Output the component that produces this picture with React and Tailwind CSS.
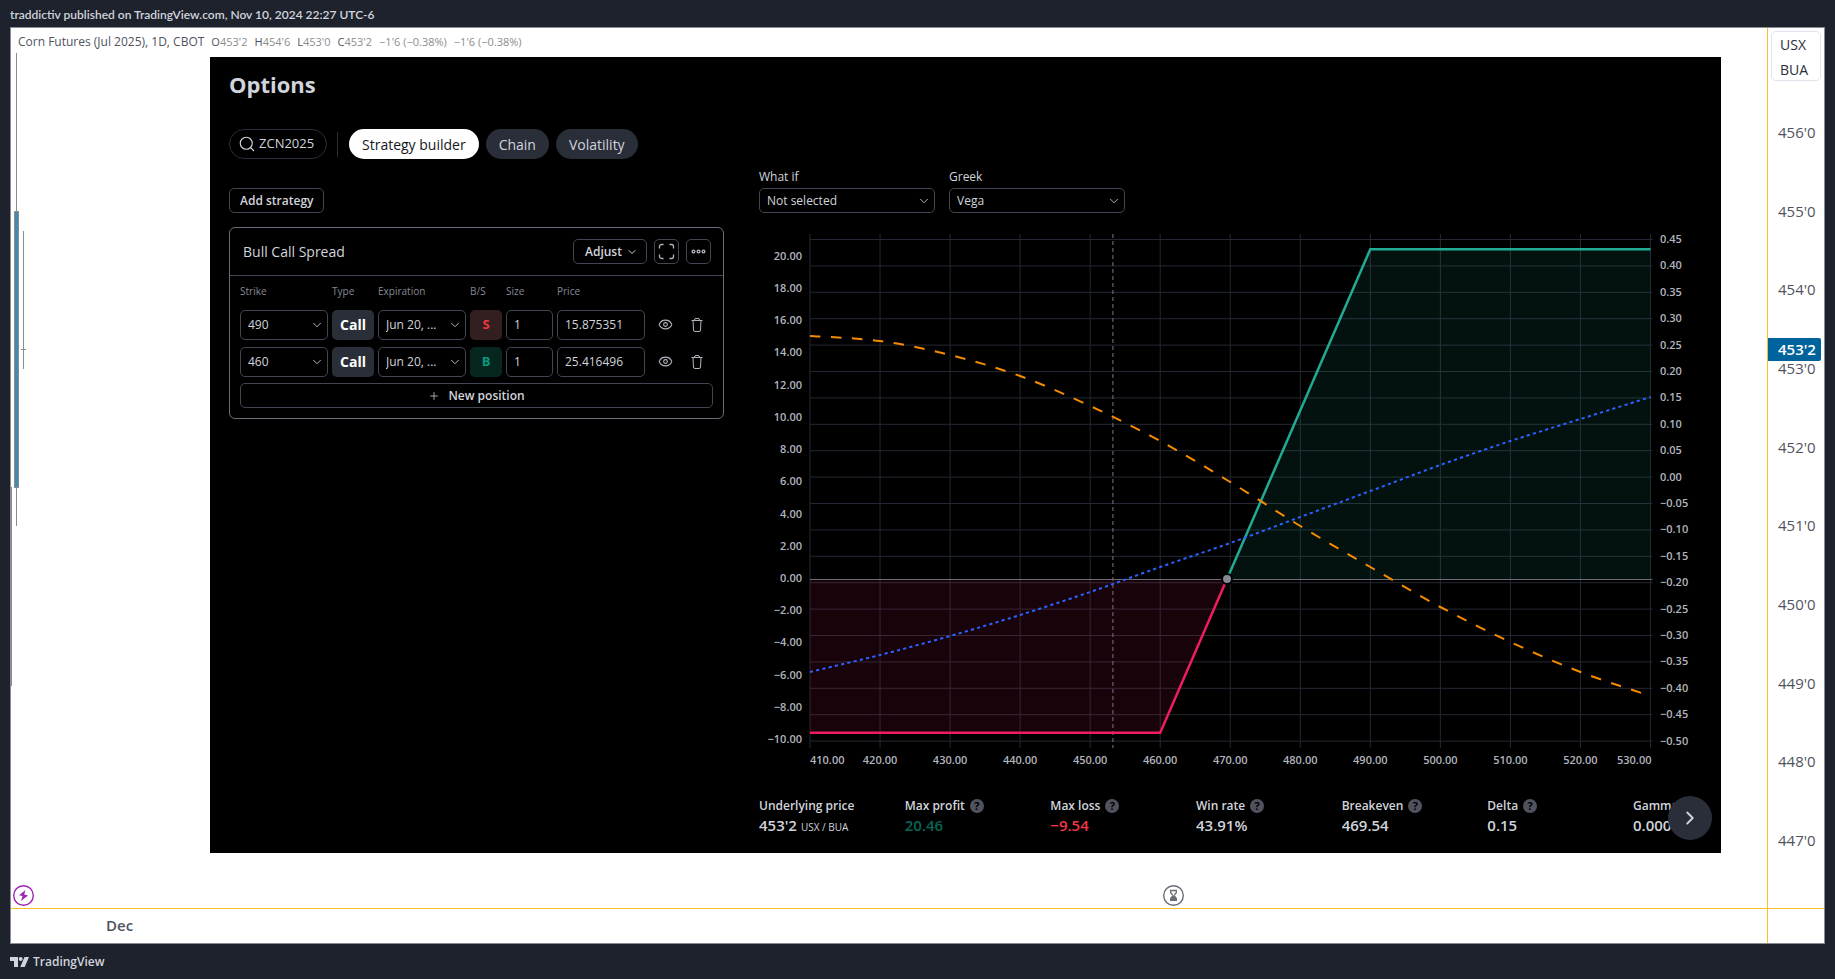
import React, { useState } from 'react';
import { ChevronDown, ChevronRight, Eye, Plus, Search } from 'lucide-react';

const statItems = [
    { label: 'Underlying price', value: "453'2", unit: 'USX / BUA' },
    { label: 'Max profit', value: '20.46', color: 'text-[#056656]', help: true },
    { label: 'Max loss', value: '−9.54', color: 'text-[#f23645]', help: true },
    { label: 'Win rate', value: '43.91%', help: true },
    { label: 'Breakeven', value: '469.54', help: true },
    { label: 'Delta', value: '0.15', help: true },
    { label: 'Gamma', value: '0.0001', help: true },
];

const initialPositions = [
    { id: 1, strike: '490', type: 'Call', expiration: 'Jun 20, ...', side: 'S', size: '1', price: '15.875351' },
    { id: 2, strike: '460', type: 'Call', expiration: 'Jun 20, ...', side: 'B', size: '1', price: '25.416496' },
];

const priceLabels = ["456'0", "455'0", "454'0", "453'0", "452'0", "451'0", "450'0", "449'0", "448'0", "447'0"];

const tabs = ['Strategy builder', 'Chain', 'Volatility'];

const App = () => {
    const [activeTab, setActiveTab] = useState('Strategy builder');
    const [positions, setPositions] = useState(initialPositions);

    const updatePosition = (id, field, value) => {
        setPositions(positions.map((p) => (p.id === id ? { ...p, [field]: value } : p)));
    };

    return (
        <div className="flex min-h-screen flex-col bg-[#1e222d] px-[10px] font-['Open_Sans',sans-serif]">
            <header className="h-[27px] font-['Lato',sans-serif] text-[12px] leading-[30px] font-semibold text-[#d1d4dc]">
                traddictiv published on TradingView.com, Nov 10, 2024 22:27 UTC-6
            </header>

            <main className="grid flex-1 grid-cols-[minmax(0,1fr)_57px] grid-rows-[1fr_35px] border border-[#8a8d96] bg-white">
                <section className="relative pr-[46px] pb-[55px] pl-[199px]">
                    <Candles />
                    <Legend />

                    <div className="relative bg-black px-[19px] pb-[16px] text-[#d1d4dc]">
                        <h1 className="pt-[10px] text-[22px] leading-[34px] font-bold">Options</h1>

                        <nav className="mt-[28px] flex h-[30px] items-center text-[14px]">
                            <button className="flex h-[30px] w-[98px] items-center gap-[3px] rounded-full border border-[#2a2e39] pl-2 text-[13px] font-medium">
                                <Search className="h-[18px] w-[18px]" strokeWidth={1.5} />
                                ZCN2025
                            </button>
                            <span className="mr-[11px] ml-[10px] h-[25px] w-px bg-[#2a2e39]" />
                            <div className="flex gap-[7px]">
                                {tabs.map((tab) => (
                                    <button
                                        key={tab}
                                        onClick={() => setActiveTab(tab)}
                                        className={`h-[30px] rounded-full px-[13px] ${activeTab === tab
                                            ? 'bg-white text-[#131722]'
                                            : 'bg-[#2a2e39] text-[#d1d4dc]'
                                            }`}
                                    >
                                        {tab}
                                    </button>
                                ))}
                            </div>
                        </nav>

                        <div className="mt-[8px] grid grid-cols-[495px_minmax(0,1fr)] gap-[35px]">
                            {/* Strategy column */}
                            <div className="pt-[21px]">
                                <button className="block h-[25px] rounded-[5px] border border-[#434651] px-[10px] text-[12px] font-semibold">
                                    Add strategy
                                </button>

                                <div className="mt-[14px] rounded-[6px] border border-[#6a6d78]">
                                    <div className="flex h-[48px] items-center gap-[7px] border-b border-[#434651] pr-[12px] pl-[13px]">
                                        <h2 className="mr-auto text-[14px]">Bull Call Spread</h2>
                                        <button className="flex h-[25px] w-[74px] items-center justify-between rounded-[5px] border border-[#434651] pr-2 pl-[11px] text-[12px] font-semibold">
                                            Adjust
                                            <ChevronDown className="h-3 w-3" strokeWidth={2} />
                                        </button>
                                        <button aria-label="Fullscreen" className="flex h-[25px] w-[25px] items-center justify-center rounded-[5px] border border-[#434651]">
                                            <FullscreenIcon />
                                        </button>
                                        <button aria-label="More" className="flex h-[25px] w-[25px] items-center justify-center rounded-[5px] border border-[#434651]">
                                            <MoreIcon />
                                        </button>
                                    </div>

                                    <div className="px-[10px] pb-[10px]">
                                        <table className="w-full table-fixed text-[12px]">
                                            <colgroup>
                                                <col className="w-[92px]" />
                                                <col className="w-[46px]" />
                                                <col className="w-[92px]" />
                                                <col className="w-[36px]" />
                                                <col className="w-[51px]" />
                                                <col className="w-[92px]" />
                                                <col />
                                                <col />
                                            </colgroup>
                                            <thead>
                                                <tr className="h-[30px] text-left text-[10px] text-[#868993]">
                                                    <th className="font-normal">Strike</th>
                                                    <th className="font-normal">Type</th>
                                                    <th className="font-normal">Expiration</th>
                                                    <th className="font-normal">B/S</th>
                                                    <th className="font-normal">Size</th>
                                                    <th className="font-normal">Price</th>
                                                    <th />
                                                    <th />
                                                </tr>
                                            </thead>
                                            <tbody>
                                                {positions.map((p) => (
                                                    <tr key={p.id} className="h-[37px]">
                                                        <td className="pr-1">
                                                            <SelectBox label="Strike" options={[p.strike]} className="h-[30px]" />
                                                        </td>
                                                        <td className="pr-1">
                                                            <button className="block h-[30px] w-full rounded-[5px] bg-[#2a2e39] text-[14px] leading-[28px] font-bold text-white">
                                                                {p.type}
                                                            </button>
                                                        </td>
                                                        <td className="pr-1">
                                                            <SelectBox label="Expiration" options={[p.expiration]} className="h-[30px]" />
                                                        </td>
                                                        <td className="pr-1">
                                                            <button
                                                                className={`block h-[30px] w-full rounded-[5px] text-[13px] font-bold ${p.side === 'S'
                                                                    ? 'bg-[#331f20] text-[#f23645]'
                                                                    : 'bg-[#06271f] text-[#089981]'
                                                                    }`}
                                                            >
                                                                {p.side}
                                                            </button>
                                                        </td>
                                                        <td className="pr-1">
                                                            <input
                                                                aria-label="Size"
                                                                value={p.size}
                                                                onChange={(e) => updatePosition(p.id, 'size', e.target.value)}
                                                                className="block h-[30px] w-full rounded-[5px] border border-[#434651] px-[7px] font-medium"
                                                            />
                                                        </td>
                                                        <td className="pr-1">
                                                            <input
                                                                aria-label="Price"
                                                                value={p.price}
                                                                onChange={(e) => updatePosition(p.id, 'price', e.target.value)}
                                                                className="block h-[30px] w-full rounded-[5px] border border-[#434651] px-[7px] font-medium"
                                                            />
                                                        </td>
                                                        <td>
                                                            <button aria-label="Hide" className="mx-auto block text-[#b2b5be]">
                                                                <Eye className="h-[15px] w-[15px]" strokeWidth={1.7} />
                                                            </button>
                                                        </td>
                                                        <td>
                                                            <button aria-label="Delete" className="mx-auto block text-[#b2b5be]">
                                                                <TrashIcon />
                                                            </button>
                                                        </td>
                                                    </tr>
                                                ))}
                                            </tbody>
                                        </table>

                                        <button className="mt-[3px] flex h-[25px] w-full items-center justify-center gap-2 rounded-[5px] border border-[#434651] text-[12px] font-semibold">
                                            <Plus className="h-3 w-3" strokeWidth={1.5} />
                                            New position
                                        </button>
                                    </div>
                                </div>
                            </div>

                            {/* Chart column */}
                            <div>
                                <div className="flex gap-[14px] text-[12px]">
                                    <label className="w-[176px]">
                                        <span className="block h-[21px] leading-[19px]">What if</span>
                                        <SelectBox options={['Not selected']} className="h-[25px]" />
                                    </label>
                                    <label className="w-[176px]">
                                        <span className="block h-[21px] leading-[19px]">Greek</span>
                                        <SelectBox options={['Vega']} className="h-[25px]" />
                                    </label>
                                </div>

                                <PayoffChart />

                                <div className="mt-[29px] grid grid-cols-[repeat(6,minmax(0,1fr))_69px] overflow-hidden">
                                    {statItems.map((item) => (
                                        <StatItem key={item.label} {...item} />
                                    ))}
                                </div>
                            </div>
                        </div>

                        <button aria-label="Next" className="absolute right-[9px] bottom-[13px] flex h-[44px] w-[44px] items-center justify-center rounded-full bg-[#2a2e39]">
                            <ChevronRight className="h-[22px] w-[22px]" strokeWidth={2} />
                        </button>
                    </div>

                    <span className="absolute bottom-[2px] left-[2px]"><BoltBadge /></span>
                    <span className="absolute bottom-[2px] left-[65.6%]"><HourglassBadge /></span>
                </section>

                <PriceScale />

                <div className="border-t border-[#f7c02c] pl-[95px] text-[15px] leading-[32px] font-semibold text-[#50535e]">Dec</div>
                <div className="border-t border-l border-[#f7c02c]" />
            </main>

            <footer className="flex h-[35px] items-center gap-1 text-[12px] font-semibold text-[#d1d4dc]">
                <TradingViewLogo />
                TradingView
            </footer>
        </div>
    );
};

const Legend = () => (
    <p className="-ml-[199px] h-[29px] pl-[7px] text-[12px] leading-[28px] text-[#50535e]">
        Corn Futures (Jul 2025), 1D, CBOT
        <span className="text-[11px]">
            <span className="ml-[7px]">O<span className="text-[#8c8c8c]">453'2</span></span>
            <span className="ml-[7px]">H<span className="text-[#8c8c8c]">454'6</span></span>
            <span className="ml-[7px]">L<span className="text-[#8c8c8c]">453'0</span></span>
            <span className="ml-[7px]">C<span className="text-[#8c8c8c]">453'2</span></span>
            <span className="ml-[7px] text-[#8c8c8c]">−1'6 (−0.38%)</span>
            <span className="ml-[7px] text-[#8c8c8c]">−1'6 (−0.38%)</span>
        </span>
    </p>
);

const SelectBox = ({ label, options, className }) => (
    <span className="relative block">
        <select
            aria-label={label}
            className={`block w-full appearance-none rounded-[5px] border border-[#434651] bg-black pr-6 pl-[7px] font-medium ${className}`}
        >
            {options.map((o) => (
                <option key={o}>{o}</option>
            ))}
        </select>
        <ChevronDown className="pointer-events-none absolute inset-y-0 right-1 my-auto h-[14px] w-[14px] text-[#b2b5be]" strokeWidth={1.7} />
    </span>
);

const StatItem = ({ label, value, unit, color, help }) => (
    <div className="overflow-hidden whitespace-nowrap">
        <div className="flex h-[18px] items-center gap-[5px] text-[12px] font-semibold">
            {label}
            {help && (
                <span className="flex h-[14px] w-[14px] shrink-0 items-center justify-center rounded-full bg-[#50535e] text-[11px] leading-[14px] font-bold text-black">?</span>
            )}
        </div>
        <div className={`text-[15px] leading-[20px] font-semibold ${color || ''}`}>
            {value}
            {unit && <span className="ml-1 text-[10px] font-normal">{unit}</span>}
        </div>
    </div>
);

const PriceScale = () => (
    <aside className="relative border-l border-[#f7c02c] text-[15px] text-[#50535e]">
        <div className="mx-[3px] mt-[3px] h-[50px] rounded-[5px] border border-[#e0e3eb] pl-2 text-[14px] leading-[25px] text-[#2a2e39]">
            <div>USX</div>
            <div>BUA</div>
        </div>
        <div className="mt-[40px] flex h-[730px] flex-col justify-between pl-[10px] leading-[22px]">
            {priceLabels.map((label) => (
                <span key={label}>{label}</span>
            ))}
        </div>
        <span className="absolute top-[310px] left-0 w-[53px] rounded-r-[2px] bg-[#00639c] pl-[10px] leading-[23px] font-semibold text-white">453'2</span>
    </aside>
);

const xAt = (price) => 51 + (price - 410) * 7.004;
const yAt = (profit) => 345 - profit * 16.12;

const strikes = [410, 420, 430, 440, 450, 460, 470, 480, 490, 500, 510, 520, 530];
const profits = Array.from({ length: 16 }, (_, i) => 20 - i * 2);
const greeks = Array.from({ length: 20 }, (_, i) => (45 - i * 5) / 100);
const formatNumber = (n) => n.toFixed(2).replace('-', '−');

const vegaCurve = [102, 107, 121, 142, 172, 207, 248, 292, 333, 373, 408, 438, 462];
const todayCurve = [438, 421, 402, 381, 358, 333, 309, 283, 257, 231, 207, 185, 163];

// smooth line through evenly spaced samples
const curvePath = (values) => {
    const pts = values.map((y, i) => [xAt(410 + i * 10), y]);
    let d = `M${pts[0][0]} ${pts[0][1]}`;
    for (let i = 0; i < pts.length - 1; i++) {
        const p0 = pts[i - 1] || pts[i];
        const p1 = pts[i];
        const p2 = pts[i + 1];
        const p3 = pts[i + 2] || p2;
        d += ` C${p1[0] + (p2[0] - p0[0]) / 6} ${p1[1] + (p2[1] - p0[1]) / 6} ${p2[0] - (p3[0] - p1[0]) / 6} ${p2[1] - (p3[1] - p1[1]) / 6} ${p2[0]} ${p2[1]}`;
    }
    return d;
};

const PayoffChart = () => {
    const right = xAt(530);
    return (
        <svg viewBox="0 0 943 534" className="mt-[21px] block h-auto w-full overflow-visible" fontSize="11" fontWeight="600" fill="#b2b5be">
            {strikes.map((s) => (
                <line key={s} x1={xAt(s)} x2={xAt(s)} y1="0" y2="514" stroke="#242832" />
            ))}
            {greeks.map((g, i) => (
                <line key={g} x1="51" x2={right + 2} y1={5.5 + i * 26.4} y2={5.5 + i * 26.4} stroke="#242832" />
            ))}
            <line x1={xAt(453.25)} x2={xAt(453.25)} y1="0" y2="514" stroke="#787b86" strokeDasharray="4 3" />

            <path d={`M51 345V${yAt(-9.54)}H${xAt(460)}L${xAt(469.54)} 345Z`} fill="#e91e63" fillOpacity="0.1" />
            <path d={`M${xAt(469.54)} 345L${xAt(490)} ${yAt(20.46)}H${right}V345Z`} fill="#22ab94" fillOpacity="0.1" />
            <line x1="51" x2={right + 2} y1="345.5" y2="345.5" stroke="#6a6d78" />
            <path d={`M51 ${yAt(-9.54)}H${xAt(460)}L${xAt(469.54)} 345`} fill="none" stroke="#f01c60" strokeWidth="2.5" />
            <path d={`M${xAt(469.54)} 345L${xAt(490)} ${yAt(20.46)}H${right}`} fill="none" stroke="#22ab94" strokeWidth="2.5" />
            <path d={curvePath(vegaCurve)} fill="none" stroke="#f58b00" strokeWidth="2" strokeDasharray="10.5 10.5" />
            <path d={curvePath(todayCurve)} fill="none" stroke="#2962ff" strokeWidth="2" strokeDasharray="3.2 3.2" />
            <circle cx={xAt(469.54)} cy="345" r="5" fill="#868993" stroke="#000" strokeWidth="2" />

            {profits.map((p) => (
                <text key={p} x="43" y={yAt(p) + 3} textAnchor="end">{formatNumber(p)}</text>
            ))}
            {greeks.map((g, i) => (
                <text key={g} x="901" y={9 + i * 26.4}>{formatNumber(g)}</text>
            ))}
            {strikes.map((s) => (
                <text
                    key={s}
                    x={s === 530 ? right + 1 : xAt(s)}
                    y="530"
                    textAnchor={s === 410 ? 'start' : s === 530 ? 'end' : 'middle'}
                >
                    {formatNumber(s)}
                </text>
            ))}
        </svg>
    );
};

const Candles = () => (
    <svg className="absolute top-0 left-0" width="20" height="660" fill="#438ab3" stroke="#8c8c8c" shapeRendering="crispEdges">
        <rect x="-3.5" y="459.5" width="4" height="198" />
        <path d="M5.5 25V498M12.5 203V341M10 321.5H15" fill="none" />
        <rect x="3.5" y="183.5" width="4" height="276" />
    </svg>
);

const FullscreenIcon = () => (
    <svg width="17" height="17" viewBox="0 0 17 17" fill="none" stroke="#b2b5be">
        <path d="M1.5 5.5V3.5a2 2 0 0 1 2-2h2M11.5 1.5h2a2 2 0 0 1 2 2v2M15.5 11.5v2a2 2 0 0 1-2 2h-2M5.5 15.5h-2a2 2 0 0 1-2-2v-2" strokeWidth="1.3" />
    </svg>
);

const MoreIcon = () => (
    <svg width="15" height="5" viewBox="0 0 15 5" fill="none" stroke="#b2b5be" strokeWidth="1.3">
        <circle cx="2.5" cy="2.5" r="1.4" />
        <circle cx="7.5" cy="2.5" r="1.4" />
        <circle cx="12.5" cy="2.5" r="1.4" />
    </svg>
);

const TrashIcon = () => (
    <svg width="12" height="14" viewBox="0 0 12 14" fill="none" stroke="currentColor">
        <path d="M0.5 2.5h11M3.5 2.5v-.5a1.5 1.5 0 0 1 1.5-1.5h2a1.5 1.5 0 0 1 1.5 1.5v.5M2 2.5l.5 9.5a1.5 1.5 0 0 0 1.5 1.5h4a1.5 1.5 0 0 0 1.5-1.5l.5-9.5" />
    </svg>
);

const BoltBadge = () => (
    <svg width="21" height="21" viewBox="0 0 21 21" className="block">
        <circle cx="10.5" cy="10.5" r="9.8" fill="#fff" stroke="#9c27b0" strokeWidth="1.4" />
        <path d="M12.5 5L6 10.2l3.6.9L8 16l7-5.6-3.8-.8z" fill="#9c27b0" />
    </svg>
);

const HourglassBadge = () => (
    <svg width="21" height="21" viewBox="0 0 21 21" className="block">
        <circle cx="10.5" cy="10.5" r="9.8" fill="#fff" stroke="#6a6d78" strokeWidth="1.4" />
        <path d="M7 5.5h7M7.7 5.5v2.3l2 2.2M13.3 5.5v2.3l-2 2.2" fill="none" stroke="#6a6d78" strokeWidth="1.3" />
        <path d="M7 16v-2.7l2.4-3.1h2.2l2.4 3.1V16z" fill="#6a6d78" />
    </svg>
);

const TradingViewLogo = () => (
    <svg width="19" height="10" viewBox="0 0 19 10" fill="#d1d4dc">
        <path d="M0 0h8v10H4V4H0zM19 0l-4.3 10h-4.4L14.5 0z" />
        <circle cx="10.7" cy="2" r="2" />
    </svg>
);

export default App;
